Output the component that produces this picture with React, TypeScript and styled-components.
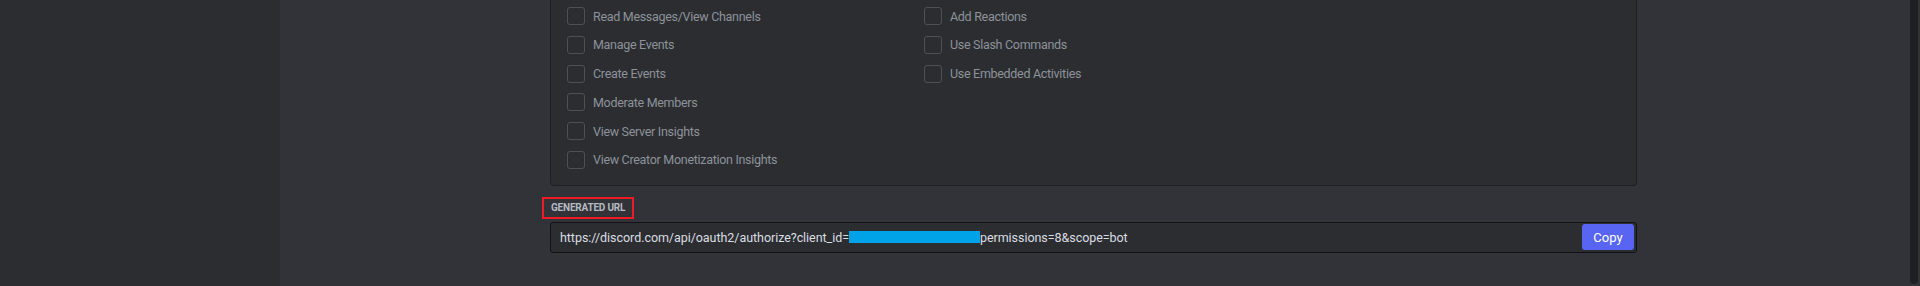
import React from "react";
import styled, { createGlobalStyle } from "styled-components";

const GlobalStyle = createGlobalStyle`
  html, body {
    margin: 0;
    padding: 0;
    background: #313338;
    overflow: hidden;
  }
  #root {
    height: 286px;
  }
`;

const Shell = styled.div`
  display: flex;
  height: 286px;
  font-family: Roboto, "Noto Sans", sans-serif;
`;

const Sidebar = styled.aside`
  width: 280px;
  flex: none;
  background: #2b2d31;
`;

const Main = styled.main`
  flex: 1;
  display: flex;
  background: #313338;
`;

const Content = styled.div`
  width: 1087px;
  margin-left: 270px;
  display: flex;
  flex-direction: column;
`;

const Panel = styled.section`
  background: #2b2d31;
  border: 1px solid #1e1f22;
  border-top: none;
  border-radius: 0 0 4px 4px;
  padding: 7px 16px 16px;
  display: grid;
  grid-template-columns: 357px 1fr;
  grid-auto-flow: column;
  grid-template-rows: repeat(6, 18px);
  row-gap: 10.8px;
`;

const Option = styled.label`
  display: flex;
  align-items: center;
  gap: 8px;
  color: #8e9299;
  font-size: 12.5px;
  letter-spacing: -0.3px;
  white-space: nowrap;
`;

const Box = styled.span`
  width: 18px;
  height: 18px;
  box-sizing: border-box;
  border: 1px solid #4e5058;
  border-radius: 3px;
  flex: none;
`;

const LabelRow = styled.div`
  margin-top: 11px;
  margin-left: -8px;
  display: flex;
`;

const Annotation = styled.span`
  display: inline-flex;
  align-items: center;
  height: 22px;
  box-sizing: border-box;
  padding: 0 7px;
  border: 2px solid #ed1c24;
`;

const Label = styled.h5`
  margin: 0;
  color: #b5bac1;
  font-size: 10px;
  font-weight: 700;
  letter-spacing: -0.2px;
  text-transform: uppercase;
`;

const UrlBox = styled.div`
  margin-top: 3px;
  height: 31px;
  box-sizing: border-box;
  display: flex;
  align-items: center;
  justify-content: space-between;
  background: #2b2d31;
  border: 1px solid #111214;
  border-radius: 3px;
  padding: 0 2px 0 9px;
`;

const UrlText = styled.span`
  color: #dbdee1;
  font-size: 12.5px;
  letter-spacing: -0.05px;
  white-space: nowrap;
  display: flex;
  align-items: center;
`;

const Redacted = styled.span`
  display: inline-block;
  width: 131px;
  height: 12px;
  background: #00a2e8;
`;

const CopyButton = styled.button`
  width: 52px;
  height: 26px;
  border: none;
  border-radius: 3px;
  background: #5865f2;
  color: #ffffff;
  font-family: inherit;
  font-size: 13px;
  padding: 0;
`;

const Scrollbar = styled.div`
  margin-left: auto;
  margin-right: 2px;
  width: 8px;
  height: 284px;
  background: #1e1f22;
  border-radius: 0 0 4px 4px;
`;

const leftColumn = [
  "Read Messages/View Channels",
  "Manage Events",
  "Create Events",
  "Moderate Members",
  "View Server Insights",
  "View Creator Monetization Insights",
];

const rightColumn = ["Add Reactions", "Use Slash Commands", "Use Embedded Activities"];

export default function App() {
  return (
    <>
      <GlobalStyle />
      <Shell>
        <Sidebar />
        <Main>
          <Content>
            <Panel>
              {leftColumn.map((name) => (
                <Option key={name}>
                  <Box />
                  {name}
                </Option>
              ))}
              {rightColumn.map((name) => (
                <Option key={name}>
                  <Box />
                  {name}
                </Option>
              ))}
            </Panel>
            <LabelRow>
              <Annotation>
                <Label>Generated URL</Label>
              </Annotation>
            </LabelRow>
            <UrlBox>
              <UrlText>
                https://discord.com/api/oauth2/authorize?client_id=
                <Redacted />
                permissions=8&amp;scope=bot
              </UrlText>
              <CopyButton>Copy</CopyButton>
            </UrlBox>
          </Content>
          <Scrollbar />
        </Main>
      </Shell>
    </>
  );
}
